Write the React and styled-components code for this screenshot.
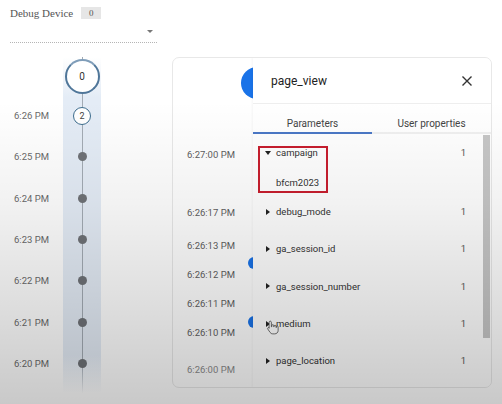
import React from 'react';
import styled, { createGlobalStyle } from 'styled-components';

const GlobalStyle = createGlobalStyle`
  html, body { margin: 0; padding: 0; background: #fff; }
  body { font-family: Roboto, "Liberation Sans", sans-serif; }
`;

const timeline = [
  { label: '6:26 PM', kind: 'count', count: 2 },
  { label: '6:25 PM', kind: 'dot' },
  { label: '6:24 PM', kind: 'dot' },
  { label: '6:23 PM', kind: 'dot' },
  { label: '6:22 PM', kind: 'dot' },
  { label: '6:21 PM', kind: 'dot' },
  { label: '6:20 PM', kind: 'dot' },
];

const events = [
  { h: 50, big: true },
  { h: 92, time: '6:27:00 PM' },
  { h: 24, time: '6:26:17 PM' },
  { h: 42, time: '6:26:13 PM', chip: -3 },
  { h: 16, time: '6:26:12 PM' },
  { h: 42, time: '6:26:11 PM', chip: -4 },
  { h: 16, time: '6:26:10 PM' },
  { h: 58, time: '6:26:00 PM', faded: true },
];

const params = [
  { name: 'debug_mode', value: 1 },
  { name: 'ga_session_id', value: 1 },
  { name: 'ga_session_number', value: 1 },
  { name: 'medium', value: 1, cursor: true },
  { name: 'page_location', value: 1 },
];

const Page = styled.div`
  position: relative;
  width: 502px;
  height: 404px;
  overflow: hidden;
  background: #fff;
`;

const Shade = styled.div`
  position: absolute;
  inset: 0;
  pointer-events: none;
  background: linear-gradient(
    to bottom,
    rgba(0, 0, 0, 0) 0%,
    rgba(0, 0, 0, 0) 25%,
    rgba(0, 0, 0, 0.05) 50%,
    rgba(0, 0, 0, 0.13) 75%,
    rgba(0, 0, 0, 0.21) 100%
  );
`;

const Header = styled.div`
  height: 57px;
  box-sizing: border-box;
  padding: 7px 0 0 10px;
  width: 157px;
`;

const DeviceRow = styled.div`
  display: flex;
  align-items: center;
  gap: 8px;
`;

const DeviceLabel = styled.span`
  font-family: "Liberation Serif", serif;
  font-size: 11px;
  color: #555;
`;

const Badge = styled.span`
  display: inline-flex;
  align-items: center;
  justify-content: center;
  width: 20px;
  height: 12px;
  background: #e6e6e6;
  color: #555;
  font-family: "Liberation Serif", serif;
  font-size: 9px;
`;

const Select = styled.div`
  margin-top: 3px;
  height: 20px;
  border-bottom: 1px dotted #b5b5b5;
  display: flex;
  align-items: center;
  justify-content: flex-end;
  padding-right: 4px;
`;

const Arrow = styled.span`
  width: 0;
  height: 0;
  border-left: 3px solid transparent;
  border-right: 3px solid transparent;
  border-top: 3px solid #777;
  margin-top: -2px;
`;

const Main = styled.div`
  display: flex;
  height: 347px;
`;

const Timeline = styled.div`
  width: 172px;
  flex: none;
  background:
    linear-gradient(
      to bottom,
      #a3abb4 0px,
      #a3abb4 88%,
      rgba(163, 171, 180, 0) 97%
    ) 81.5px 0 / 1px 100% no-repeat,
    linear-gradient(
      to bottom,
      rgba(228, 236, 246, 0) 0px,
      #e4ecf6 40px,
      #e4ecf6 86%,
      rgba(228, 236, 246, 0) 97%
    ) 63px 0 / 38px 100% no-repeat;
`;

const TRow = styled.div`
  display: grid;
  grid-template-columns: 63px 38px;
  align-items: center;
  height: ${(p) => p.$h}px;
`;

const TLabel = styled.span`
  padding-left: 14px;
  font-size: 9.5px;
  color: #6a6a6a;
  white-space: nowrap;
`;

const Marker = styled.div`
  display: flex;
  justify-content: center;
  align-items: center;
`;

const TopNode = styled.div`
  width: 35px;
  height: 35px;
  box-sizing: border-box;
  border-radius: 50%;
  border: 2.5px solid #4f7699;
  border-top-color: #7f9db9;
  background: #fff;
  display: flex;
  align-items: center;
  justify-content: center;
  font-size: 10px;
  color: #333;
`;

const CountNode = styled.div`
  width: 18px;
  height: 18px;
  box-sizing: border-box;
  border-radius: 50%;
  border: 1.5px solid #3d6d8e;
  background: #fff;
  display: flex;
  align-items: center;
  justify-content: center;
  font-size: 9px;
  color: #444;
`;

const Dot = styled.div`
  width: 9px;
  height: 9px;
  border-radius: 50%;
  background: #6f7277;
`;

const Card = styled.div`
  position: relative;
  width: 320px;
  height: 331px;
  box-sizing: border-box;
  border: 1px solid #e8e8e8;
  border-radius: 7px;
  background: #fff;
  overflow: hidden;
`;

const EventList = styled.div`
  display: flex;
  flex-direction: column;
  padding-left: 14px;
`;

const ERow = styled.div`
  display: flex;
  align-items: center;
  height: ${(p) => p.$h}px;
`;

const ETime = styled.span`
  width: 54px;
  flex: none;
  font-size: 9.5px;
  color: ${(p) => (p.$faded ? '#8a8a8a' : '#606060')};
  white-space: nowrap;
`;

const Chip = styled.div`
  border-radius: 50%;
  background: #1a73e8;
  flex: none;
  ${(p) =>
    p.$big
      ? 'width: 32px; height: 32px; margin-left: 54px;'
      : `width: 12px; height: 12px; margin-left: 7px; align-self: flex-end; margin-bottom: ${p.$mb}px;`}
`;

const Panel = styled.div`
  position: absolute;
  top: 0;
  right: 0;
  bottom: 0;
  left: 80px;
  background: #fff;
  box-shadow: -1px 0 2px rgba(0, 0, 0, 0.04);
  display: flex;
  flex-direction: column;
`;

const PanelHead = styled.div`
  height: 45px;
  flex: none;
  display: flex;
  align-items: center;
  justify-content: space-between;
  padding: 0 18px;
  border-bottom: 1px solid #eeeeee;
`;

const Title = styled.span`
  font-size: 12px;
  color: #222;
`;

const Tabs = styled.div`
  display: flex;
  height: 30px;
  flex: none;
`;

const Tab = styled.div`
  flex: 1;
  display: flex;
  align-items: center;
  justify-content: center;
  padding-top: 10px;
  font-size: 10px;
  color: #444;
  box-sizing: border-box;
  border-bottom: 2px solid ${(p) => (p.$active ? '#4b78c6' : '#f0f0f0')};
`;

const Body = styled.div`
  flex: 1;
  display: flex;
  min-height: 0;
`;

const List = styled.div`
  flex: 1;
  padding-right: 17px;
`;

const Group = styled.div`
  position: relative;
`;

const Highlight = styled.div`
  position: absolute;
  left: 5px;
  top: 12px;
  width: 70px;
  height: 47px;
  box-sizing: border-box;
  border: 2px solid #c81e2e;
  pointer-events: none;
`;

const PRow = styled.div`
  position: relative;
  display: flex;
  align-items: center;
  height: ${(p) => p.$h}px;
  padding-left: 13px;
  font-size: 9.5px;
  color: #333;
`;

const Caret = styled.span`
  width: 0;
  height: 0;
  margin-right: 6px;
  ${(p) =>
    p.$open
      ? 'border-left: 3px solid transparent; border-right: 3px solid transparent; border-top: 4px solid #222; margin-left: -1px; margin-right: 5px;'
      : 'border-top: 3px solid transparent; border-bottom: 3px solid transparent; border-left: 4px solid #222;'}
`;

const PName = styled.span`
  flex: 1;
`;

const PValue = styled.span`
  color: #555;
`;

const ValueLine = styled.div`
  height: 22px;
  display: flex;
  align-items: center;
  padding-left: 23px;
  font-size: 9.5px;
  color: #333;
`;

const Track = styled.div`
  width: 8px;
  flex: none;
  padding-top: 1px;
`;

const Thumb = styled.div`
  width: 7px;
  height: 203px;
  background: #c6c6c6;
`;

const Hand = styled.svg`
  position: absolute;
  left: 13px;
  top: 15px;
  width: 13px;
  height: 15px;
`;

const CloseIcon = () => (
  <svg width="12" height="12" viewBox="0 0 12 12">
    <path d="M1.5 1.5 L10.5 10.5 M10.5 1.5 L1.5 10.5" stroke="#333" strokeWidth="1.4" fill="none" />
  </svg>
);

const HandCursor = () => (
  <Hand viewBox="0 0 16 20">
    <path
      d="M5 1.5c.8 0 1.5.7 1.5 1.5v6h.5V7.5c0-.8.7-1.3 1.4-1.3s1.3.5 1.3 1.3v1.5h.4V8.3c0-.8.6-1.3 1.3-1.3s1.3.5 1.3 1.3V10h.4v-.9c0-.7.6-1.2 1.2-1.2s1.2.5 1.2 1.2V14c0 2.6-2 4.5-4.5 4.5H8.3c-1.5 0-2.7-.7-3.5-1.9L1.6 11.9c-.4-.6-.2-1.4.4-1.7.5-.3 1.2-.2 1.6.3L3.5 11V3c0-.8.7-1.5 1.5-1.5z"
      fill="#fff"
      stroke="#444"
      strokeWidth="1"
    />
  </Hand>
);

const App = () => {
  return (
    <Page>
      <GlobalStyle />
      <Header>
        <DeviceRow>
          <DeviceLabel>Debug Device</DeviceLabel>
          <Badge>0</Badge>
        </DeviceRow>
        <Select>
          <Arrow />
        </Select>
      </Header>
      <Main>
        <Timeline>
          <TRow $h={38}>
            <span />
            <Marker>
              <TopNode>0</TopNode>
            </Marker>
          </TRow>
          {timeline.map((t) => (
            <TRow $h={41.3} key={t.label}>
              <TLabel>{t.label}</TLabel>
              <Marker>{t.kind === 'count' ? <CountNode>{t.count}</CountNode> : <Dot />}</Marker>
            </TRow>
          ))}
        </Timeline>
        <Card>
          <EventList>
            {events.map((e, i) => (
              <ERow $h={e.h} key={i}>
                {e.big ? (
                  <Chip $big />
                ) : (
                  <>
                    <ETime $faded={e.faded}>{e.time}</ETime>
                    {e.chip !== undefined && <Chip $mb={e.chip} />}
                  </>
                )}
              </ERow>
            ))}
          </EventList>
          <Panel>
            <PanelHead>
              <Title>page_view</Title>
              <CloseIcon />
            </PanelHead>
            <Tabs>
              <Tab $active>Parameters</Tab>
              <Tab>User properties</Tab>
            </Tabs>
            <Body>
              <List>
                <Group>
                  <PRow $h={37}>
                    <Caret $open />
                    <PName>campaign</PName>
                    <PValue>1</PValue>
                  </PRow>
                  <ValueLine>bfcm2023</ValueLine>
                  <Highlight />
                </Group>
                {params.map((p) => (
                  <PRow $h={37.3} key={p.name}>
                    <Caret />
                    <PName>{p.name}</PName>
                    <PValue>{p.value}</PValue>
                    {p.cursor && <HandCursor />}
                  </PRow>
                ))}
              </List>
              <Track>
                <Thumb />
              </Track>
            </Body>
          </Panel>
        </Card>
      </Main>
      <Shade />
    </Page>
  );
};

export default App;
